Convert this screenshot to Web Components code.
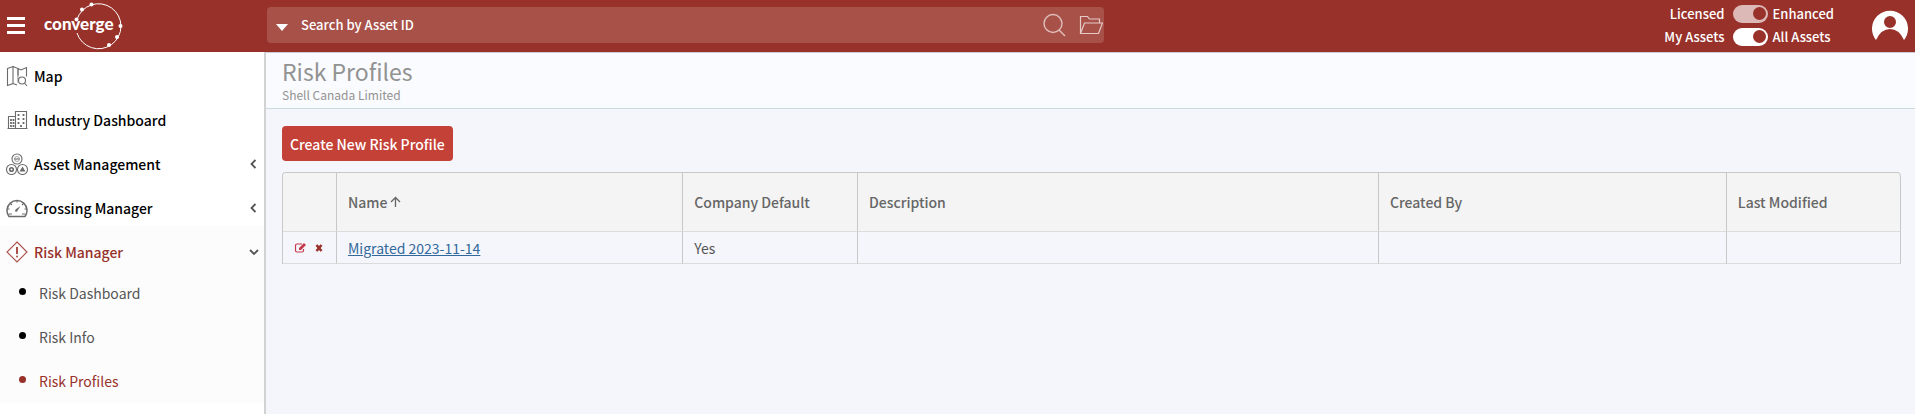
<!DOCTYPE html>
<html lang="en">
<head>
<meta charset="utf-8">
<meta name="viewport" content="width=device-width, initial-scale=1">
<title>Risk Profiles</title>
<style>
    html,body{
        margin:0;
        height:100%;
    }
    body{
        font-family:"Noto Sans CJK SC","Noto Sans",sans-serif;
        font-size:14px;
        line-height:20px;
        color:#555;
        background:#f5f6fb;
    }
</style>
</head>
<body>
<app-shell>
    <app-header slot="header"></app-header>
    <side-nav slot="nav">
        <nav-item icon="map">Map</nav-item>
        <nav-item icon="buildings">Industry Dashboard</nav-item>
        <nav-item icon="assets" arrow="left">Asset Management</nav-item>
        <nav-item icon="gauge" arrow="left">Crossing Manager</nav-item>
        <nav-group>
            <nav-item slot="head" icon="risk" arrow="down" active>Risk Manager</nav-item>
            <nav-link>Risk Dashboard</nav-link>
            <nav-link>Risk Info</nav-link>
            <nav-link active>Risk Profiles</nav-link>
        </nav-group>
    </side-nav>
    <page-title>Risk Profiles<span slot="sub">Shell Canada Limited</span></page-title>
    <profile-list></profile-list>
</app-shell>

<script>
const icons={
    map:`<path d="M1.500 3.500 7 1.500v17l-5.500 2zM7 1.500l5 2v7M7 18.500l4 1.500M12 3.500l3 1.500 5.500-2.500v9"/><path d="M12 3.500v14" stroke-width=".8"/><circle cx="16" cy="15.500" r="3.500"/><path d="m18.500 18 2.500 3"/>`,
    buildings:`<path d="M9.500 19.500v-17h11v17M2.500 19.500v-12h7M1.500 19.500h20"/><path d="M12.500 5v2M17.500 5v2M12.500 9v2M17.500 9v2M12.500 13v2M17.500 13v2M15 16v3.500M5 10v8M7.500 10v8" stroke-width="1.800" stroke-dasharray="2 1"/>`,
    assets:`<circle cx="11" cy="6" r="5"/><circle cx="5.500" cy="16.500" r="5"/><circle cx="16.500" cy="16.500" r="5"/><path d="M8.500 6h5" /><circle cx="11" cy="6" r="2.500" stroke-width=".6"/><circle cx="5.500" cy="16.500" r="1.800" stroke-width="1.600"/><path d="m16.500 14.500 2 3.500h-4z" fill="currentColor"/>`,
    gauge:`<path d="M3 19.500a10 10 0 1 1 16 0z" stroke-width="1.500"/><path d="M11 3.500v2M1.500 12h2M18.500 12h2M4.500 6.500 6 8M17.500 6.500 16 8M3 17h3M16 17h3"/><path d="m14.500 9-5 3.500q-1.500 3 1.500 2z" fill="currentColor" stroke="none"/>`,
    risk:`<path d="M11 1 21 11 11 21 1 11z"/><path d="M11 6v7" stroke-width="2"/><circle cx="11" cy="15.500" r="1" fill="currentColor" stroke="none"/>`
}

class AppShell extends HTMLElement{
    constructor(){
        super()
        this.attachShadow({mode:'open'}).innerHTML=`
        <style>
            :host{
                display:flex;
                flex-direction:column;
                min-height:100%;
            }
            .body{
                display:flex;
                flex:1;
            }
            main{
                flex:1;
                min-width:0;
                border-top:1px solid #c9ccd3;
            }
        </style>
        <slot name="header"></slot>
        <div class="body">
            <slot name="nav"></slot>
            <main><slot></slot></main>
        </div>`
    }
}

class AppHeader extends HTMLElement{
    constructor(){
        super()
        this.attachShadow({mode:'open'}).innerHTML=`
        <style>
            :host{
                display:flex;
                align-items:center;
                height:52px;
                color:#fff;
                background:#98312a;
                font-weight:500;
                font-size:13px;
            }
            button{
                padding:0;
                border:0;
                color:inherit;
                background:none;
                cursor:pointer;
            }
            svg{
                display:block;
            }
            .brand{
                display:flex;
                align-items:center;
                box-sizing:border-box;
                width:267px;
                flex:none;
                padding-left:6px;
                gap:17px;
            }
            .logo text{
                font:900 17px Lato,sans-serif;
            }
            .account{
                margin-left:auto;
                display:flex;
                align-items:center;
                gap:38px;
                padding-right:7px;
            }
        </style>
        <div class="brand">
            <button aria-label="Menu">
                <svg width="20" height="18" fill="currentColor"><path d="M1 0h18v3H1zM1 7h18v3H1zM1 14h18v3H1z"/></svg>
            </button>
            <a href="#" class="logo" aria-label="converge">
                <svg width="84" height="52" fill="#fff">
                    <path d="M34 19.500A22.500 22.500 0 1 1 34 33" fill="none" stroke="#fff"/>
                    <circle cx="33.500" cy="19.500" r="2"/><circle cx="39" cy="9.500" r="2"/><circle cx="48.500" cy="4.500" r="2"/>
                    <circle cx="77.500" cy="26" r="2"/><circle cx="74" cy="37" r="2"/><circle cx="66" cy="45" r="2"/>
                    <text x="1" y="30">converge</text>
                </svg>
            </a>
        </div>
        <search-bar></search-bar>
        <div class="account">
            <view-switches></view-switches>
            <button aria-label="Account">
                <svg width="36" height="52" fill="currentColor">
                    <path fill-rule="evenodd" d="M4 40A18 18 0 1 1 32 40Q27 29 18 29T4 40zM18 16a6 6 0 1 0 0 12 6 6 0 0 0 0-12z"/>
                </svg>
            </button>
        </div>`
    }
}

class SearchBar extends HTMLElement{
    constructor(){
        super()
        this.attachShadow({mode:'open'}).innerHTML=`
        <style>
            :host{
                display:flex;
                align-items:center;
                box-sizing:border-box;
                width:43.7%;
                height:36px;
                margin-bottom:2px;
                padding:0 1px 0 8px;
                border-radius:4px;
                background:#a85149;
            }
            button{
                padding:0;
                border:0;
                color:inherit;
                background:none;
            }
            svg{
                display:block;
            }
            input{
                flex:1;
                min-width:0;
                padding:0 0 0 12px;
                border:0;
                outline:0;
                font:inherit;
                color:#fff;
                background:none;
            }
            input::placeholder{
                color:#fff;
                opacity:1;
            }
            .tools{
                display:flex;
                gap:12px;
            }
        </style>
        <button aria-label="Search type">
            <svg width="14" height="20" fill="currentColor"><path d="M1 9h12l-6 7z"/></svg>
        </button>
        <input type="text" placeholder="Search by Asset ID" aria-label="Search by Asset ID">
        <div class="tools">
            <button aria-label="Search">
                <svg width="24" height="24" fill="none" stroke="#e0bfbc" stroke-width="1.400"><circle cx="10" cy="10.500" r="9"/><path d="m16 17 6 6"/></svg>
            </button>
            <button aria-label="Open folder">
                <svg width="24" height="24" fill="none" stroke="#e6cac7" stroke-width="1.200"><path d="M1.500 20.500v-17h7l2 2.500h10v4M1.500 20.500l4-10.500h18l-4 10.500z"/></svg>
            </button>
        </div>`
    }
}

class ViewSwitches extends HTMLElement{
    constructor(){
        super()
        this.attachShadow({mode:'open'}).innerHTML=`
        <style>
            :host{
                display:grid;
                grid-template-columns:auto 35px auto;
                align-items:center;
                gap:3px 4px;
                margin-bottom:2px;
            }
            label{
                white-space:nowrap;
            }
            .left{
                text-align:right;
                padding-right:5px;
            }
            input{
                appearance:none;
                display:flex;
                justify-content:flex-end;
                align-items:center;
                box-sizing:border-box;
                width:35px;
                height:18px;
                margin:0;
                padding-right:2px;
                border-radius:9px;
                background:#fff;
            }
            input::before{
                content:"";
                width:13px;
                height:13px;
                border-radius:50%;
                background:#98312a;
            }
            input:disabled{
                background:#dcb9b7;
            }
        </style>
        <label class="left" for="tier">Licensed</label>
        <input type="checkbox" role="switch" id="tier" checked disabled>
        <label for="tier">Enhanced</label>
        <label class="left" for="scope">My Assets</label>
        <input type="checkbox" role="switch" id="scope" checked>
        <label for="scope">All Assets</label>`
    }
}

class SideNav extends HTMLElement{
    constructor(){
        super()
        this.attachShadow({mode:'open'}).innerHTML=`
        <style>
            :host{
                display:block;
                box-sizing:border-box;
                flex:none;
                width:266px;
                border-right:2px solid #d2d2d2;
                background:#fff;
            }
            nav{
                display:flex;
                flex-direction:column;
                padding-top:6px;
            }
            ::slotted(nav-item){
                margin-bottom:8px;
            }
        </style>
        <nav><slot></slot></nav>`
    }
}

class NavItem extends HTMLElement{
    constructor(){
        super()
        this._shadowRoot = this.attachShadow({mode:'open'})
    }
    connectedCallback(){
        const arrow={
            left:'<path d="M8.500 3 4.500 7l4 4"/>',
            down:'<path d="M3 5l4 4 4-4"/>'
        }[this.getAttribute('arrow')]
        this._shadowRoot.innerHTML=`
        <style>
            :host{
                display:block;
                color:#000;
            }
            :host([active]){
                color:#98312a;
            }
            a{
                display:flex;
                align-items:center;
                height:36px;
                padding:0 3px 0 6px;
                color:inherit;
                font-weight:500;
                text-decoration:none;
            }
            .text{
                flex:1;
                padding-left:6px;
            }
            .icon{
                color:#6b6b6b;
            }
            :host([active]) .icon{
                color:#a9504a;
            }
        </style>
        <a href="#">
            <svg class="icon" width="22" height="22" fill="none" stroke="currentColor" stroke-width="1.100">${icons[this.getAttribute('icon')]}</svg>
            <span class="text"><slot></slot></span>
            ${arrow?`<svg width="14" height="14" fill="none" stroke="#555" stroke-width="1.800">${arrow}</svg>`:''}
        </a>`
    }
}

class NavGroup extends HTMLElement{
    constructor(){
        super()
        this.attachShadow({mode:'open'}).innerHTML=`
        <style>
            :host{
                display:block;
                margin-top:-8px;
                padding-top:8px;
                background:#fcfcfc;
            }
            .links{
                padding-top:1px;
            }
        </style>
        <slot name="head"></slot>
        <div class="links"><slot></slot></div>`
    }
}

class NavLink extends HTMLElement{
    constructor(){
        super()
        this.attachShadow({mode:'open'}).innerHTML=`
        <style>
            :host{
                display:block;
                color:#000;
            }
            a{
                display:flex;
                align-items:center;
                gap:13px;
                height:44px;
                padding-left:19px;
                color:#555;
                text-decoration:none;
            }
            .dot{
                width:7px;
                height:7px;
                margin-bottom:4px;
                border-radius:50%;
                background:#000;
            }
            :host([active]) a{
                color:#98312a;
            }
            :host([active]) .dot{
                background:#98312a;
            }
        </style>
        <a href="#"><span class="dot"></span><slot></slot></a>`
    }
}

class PageTitle extends HTMLElement{
    constructor(){
        super()
        this.attachShadow({mode:'open'}).innerHTML=`
        <style>
            :host{
                display:block;
                padding:3px 16px 5px;
                border-bottom:1px solid #c9dae1;
                background:#fafbfe;
                color:#929292;
            }
            h1{
                margin:0;
                font-size:23px;
                font-weight:400;
                line-height:30px;
            }
            p{
                margin:0;
                font-size:12px;
                line-height:17px;
            }
        </style>
        <h1><slot></slot></h1>
        <p><slot name="sub"></slot></p>`
    }
}

class ProfileList extends HTMLElement{
    constructor(){
        super()
        this.attachShadow({mode:'open'}).innerHTML=`
        <style>
            :host{
                display:block;
                padding:17px 14px 17px 16px;
            }
            .create{
                display:block;
                height:35px;
                margin-bottom:11px;
                padding:0 8px;
                border:0;
                border-radius:4px;
                font:inherit;
                font-weight:500;
                color:#fff;
                background:#c44137;
            }
            table{
                width:100%;
                table-layout:fixed;
                border-collapse:separate;
                border-spacing:0;
                border-top:1px solid #c8c8c8;
                border-left:1px solid #c8c8c8;
                border-radius:4px 4px 0 0;
            }
            th,td{
                box-sizing:border-box;
                padding:0 11px;
                border-right:1px solid #c8c8c8;
                border-bottom:1px solid #dcdcdc;
                text-align:left;
            }
            th{
                height:59px;
                font-weight:500;
                color:#666;
                background:#f4f4f4;
            }
            th:first-child{
                border-top-left-radius:4px;
            }
            th:last-child{
                border-top-right-radius:4px;
            }
            td{
                height:32px;
            }
            td a{
                color:#31699c;
            }
            .actions{
                display:flex;
                gap:8px;
            }
            .actions button{
                padding:0;
                border:0;
                background:none;
            }
            svg{
                display:block;
            }
            .sort{
                display:flex;
                align-items:center;
                gap:3px;
            }
        </style>
        <button class="create">Create New Risk Profile</button>
        <table>
            <colgroup>
                <col style="width:54px"><col style="width:21.4%"><col style="width:10.8%">
                <col style="width:32.2%"><col style="width:21.5%"><col>
            </colgroup>
            <thead>
                <tr>
                    <th></th>
                    <th><span class="sort">Name <svg width="11" height="12" fill="none" stroke="#666" stroke-width="1.300"><path d="M5.500 11V1.500M1 6l4.500-4.500L10 6"/></svg></span></th>
                    <th>Company Default</th>
                    <th>Description</th>
                    <th>Created By</th>
                    <th>Last Modified</th>
                </tr>
            </thead>
            <tbody>
                <tr>
                    <td>
                        <div class="actions">
                            <button aria-label="Edit"><svg width="13" height="12" fill="none" stroke="#c4394c" stroke-width="1.200"><path d="M8 2H3Q1.500 2 1.500 3.500v5Q1.500 10 3 10h5q1.500 0 1.500-1.500V7"/><path d="M5 8V6l5-5 2 2-5 5z" fill="#c4394c" stroke="none"/></svg></button>
                            <button aria-label="Delete"><svg width="9" height="12" fill="none" stroke="#98312a" stroke-width="2.600"><path d="m1.500 3 5 6M6.500 3l-5 6"/></svg></button>
                        </div>
                    </td>
                    <td><a href="#">Migrated 2023-11-14</a></td>
                    <td>Yes</td>
                    <td></td>
                    <td></td>
                    <td></td>
                </tr>
            </tbody>
        </table>`
    }
}

window.customElements.define('app-shell',AppShell)
window.customElements.define('app-header',AppHeader)
window.customElements.define('search-bar',SearchBar)
window.customElements.define('view-switches',ViewSwitches)
window.customElements.define('side-nav',SideNav)
window.customElements.define('nav-item',NavItem)
window.customElements.define('nav-group',NavGroup)
window.customElements.define('nav-link',NavLink)
window.customElements.define('page-title',PageTitle)
window.customElements.define('profile-list',ProfileList)
</script>
</body>
</html>
